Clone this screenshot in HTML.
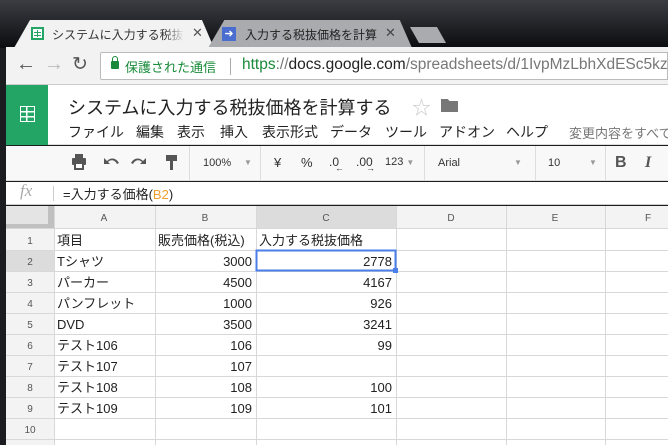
<!DOCTYPE html><html><head><meta charset="utf-8"><style>
*{margin:0;padding:0;box-sizing:border-box}
body{width:668px;height:445px;overflow:hidden;background:#1a1c20;font-family:"Liberation Sans","Noto Sans CJK JP",sans-serif;position:relative}
.a{position:absolute}
.t{white-space:nowrap}
</style></head><body>
<div class="a" style="left:0;top:0;width:668px;height:48px;background:linear-gradient(#3a3d42,#0c0d10)"></div>
<!-- tabs -->
<div class="a" style="left:14px;top:20px;width:200px;height:28px;background:#f2f2f2;clip-path:polygon(0 100%,8% 0,94% 0,100% 100%)"></div>
<div class="a" style="left:31px;top:27px;width:13px;height:13px;background:#23a566;border:2px solid #23a566"><div style="width:9px;height:9px;border:1px solid #fff;background:linear-gradient(#23a566,#23a566) 0 2px/9px 1px no-repeat,linear-gradient(#23a566,#23a566) 0 5px/9px 1px no-repeat,linear-gradient(#23a566,#23a566) 3px 0/1px 9px no-repeat,#fff"></div></div>
<div class="a t" style="left:52px;top:26px;width:132px;overflow:hidden;font-size:12px;color:#333;-webkit-mask-image:linear-gradient(90deg,#000 85%,transparent)">システムに入力する税抜価格</div>
<div class="a" style="left:192px;top:25px;font-size:13px;color:#555">✕</div>
<div class="a" style="left:208px;top:20px;width:204px;height:28px;background:#a9abaf;clip-path:polygon(0 100%,8% 0,94% 0,100% 100%)"></div>
<div class="a" style="left:222px;top:27px;width:14px;height:14px;background:#4a6ed0;color:#fff;font-size:11px;text-align:center;line-height:14px">➜</div>
<div class="a t" style="left:245px;top:26px;font-size:12px;color:#222">入力する税抜価格を計算</div>
<div class="a" style="left:385px;top:25px;font-size:13px;color:#444">✕</div>
<div class="a" style="left:410px;top:27px;width:36px;height:16px;background:#a9abaf;clip-path:polygon(0 0,75% 0,100% 100%,25% 100%)"></div>
<!-- toolbar -->
<div class="a" style="left:6px;top:47px;width:662px;height:38px;background:#f2f2f2;border-bottom:1px solid #ccc"></div>
<div class="a" style="left:16px;top:53px;font-size:20px;color:#555">←</div>
<div class="a" style="left:44px;top:53px;font-size:20px;color:#bbb">→</div>
<div class="a" style="left:72px;top:53px;font-size:19px;color:#555">↻</div>
<div class="a" style="left:100px;top:52px;width:568px;height:28px;background:#fff;border:1px solid #bbb;border-radius:2px 0 0 2px"></div>
<div class="a" style="left:111px;top:61px;width:8px;height:8px;background:#198a3a;border-radius:1px"></div>
<div class="a" style="left:112px;top:56px;width:6px;height:7px;border:1.5px solid #198a3a;border-bottom:none;border-radius:3px 3px 0 0"></div>
<div class="a t" style="left:125px;top:57px;font-size:13px;color:#198a3a">保護された通信</div>
<div class="a" style="left:230px;top:58px;width:1px;height:17px;background:#aaa"></div>
<div class="a t" style="left:242px;top:56px;font-size:15.5px;color:#777"><span style="color:#198a3a">https</span>://<span style="color:#222">docs.google.com</span>/spreadsheets/d/1IvpMzLbhXdESc5kz</div>
<!-- sheets header -->
<div class="a" style="left:6px;top:85px;width:662px;height:60px;background:#fff;border-bottom:1px solid #ddd"></div>
<div class="a" style="left:6px;top:85px;width:42px;height:60px;background:#23a566"></div>
<div class="a" style="left:20px;top:106px;width:15px;height:16px;border:1.5px solid #fff;background:linear-gradient(#fff,#fff) 0 4px/100% 1.5px no-repeat,linear-gradient(#fff,#fff) 0 9px/100% 1.5px no-repeat,linear-gradient(#fff,#fff) 5px 0/1.5px 100% no-repeat"></div>
<div class="a t" style="left:68px;top:94px;font-size:18px;color:#222">システムに入力する税抜価格を計算する</div>
<div class="a" style="left:412px;top:93px;font-size:19px;color:#ccc">☆</div>
<div class="a" style="left:441px;top:99px;width:17px;height:13px;background:#777;clip-path:polygon(0 0,40% 0,50% 15%,100% 15%,100% 100%,0 100%)"></div>
<div class="a t" style="top:122px;font-size:14px;color:#222;left:0;width:668px">
<span class="a" style="left:68px">ファイル</span><span class="a" style="left:136px">編集</span><span class="a" style="left:177px">表示</span><span class="a" style="left:220px">挿入</span><span class="a" style="left:262px">表示形式</span><span class="a" style="left:330px">データ</span><span class="a" style="left:385px">ツール</span><span class="a" style="left:439px">アドオン</span><span class="a" style="left:506px">ヘルプ</span></div>
<div class="a t" style="left:569px;top:123px;font-size:13px;color:#777">変更内容をすべて</div>
<!-- tool row -->
<div class="a" style="left:6px;top:146px;width:662px;height:35px;background:#f8f8f8;border-bottom:1px solid #ddd"></div>
<svg class="a" style="left:70px;top:154px" width="110" height="18" fill="#555">
<rect x="5" y="0" width="8" height="4"/><rect x="2" y="4" width="14" height="7" rx="1"/><rect x="5" y="9" width="8" height="6" fill="#fff" stroke="#555" stroke-width="2"/>
<path d="M34 4v6h6l-2-2c3-3 7-2 9 2l2-1c-3-5-8-6-12-2z"/>
<path d="M76 4v6h-6l2-2c-3-3-7-2-9 2l-2-1c3-5 8-6 12-2z"/>
<rect x="96" y="1" width="11" height="6"/><rect x="100" y="7" width="3" height="9"/>
</svg>
<div class="a" style="left:189px;top:146px;width:1px;height:35px;background:#ddd"></div>
<div class="a t" style="left:203px;top:157px;font-size:11px;color:#333">100%</div>
<div class="a" style="left:244px;top:158px;font-size:8px;color:#999">▼</div>
<div class="a" style="left:260px;top:146px;width:1px;height:35px;background:#ddd"></div>
<div class="a t" style="left:274px;top:155px;font-size:13px;color:#333">¥</div>
<div class="a t" style="left:301px;top:155px;font-size:13px;color:#333">%</div>
<div class="a t" style="left:329px;top:155px;font-size:12px;color:#333">.0</div>
<div class="a t" style="left:335px;top:163px;font-size:9px;color:#333">←</div>
<div class="a t" style="left:356px;top:155px;font-size:12px;color:#333">.00</div>
<div class="a t" style="left:366px;top:163px;font-size:9px;color:#333">→</div>
<div class="a t" style="left:385px;top:156px;font-size:11px;color:#333">123 <span style="color:#999;font-size:8px">▼</span></div>
<div class="a" style="left:424px;top:146px;width:1px;height:35px;background:#ddd"></div>
<div class="a t" style="left:438px;top:157px;font-size:11px;color:#333">Arial</div>
<div class="a" style="left:514px;top:158px;font-size:8px;color:#999">▼</div>
<div class="a" style="left:535px;top:146px;width:1px;height:35px;background:#ddd"></div>
<div class="a t" style="left:548px;top:157px;font-size:11px;color:#333">10</div>
<div class="a" style="left:589px;top:158px;font-size:8px;color:#999">▼</div>
<div class="a" style="left:605px;top:146px;width:1px;height:35px;background:#ddd"></div>
<div class="a" style="left:615px;top:154px;font-size:16px;font-weight:bold;color:#555">B</div>
<div class="a" style="left:645px;top:154px;font-size:16px;font-style:italic;font-family:'Liberation Serif',serif;font-weight:bold;color:#555">I</div>
<!-- formula bar -->
<div class="a" style="left:6px;top:182px;width:662px;height:23px;background:#fff;border-bottom:1px solid #ccc"></div>
<div class="a" style="left:20px;top:181px;font-size:17px;font-style:italic;font-family:'Liberation Serif',serif;color:#aaa">fx</div>
<div class="a" style="left:53px;top:186px;width:1px;height:15px;background:#ccc"></div>
<div class="a t" style="left:63px;top:184px;font-size:13px;color:#222">=入力する価格(<span style="color:#f0a030">B2</span>)</div>
<!-- grid -->
<div class="a" style="left:6px;top:206px;width:662px;height:239px;background:#fff"></div>
<svg class="a" style="left:0;top:0" width="668" height="445">
<rect x="6" y="206" width="662" height="23" fill="#f3f3f3"/>
<rect x="256" y="206" width="140" height="23" fill="#dcdcdc"/>
<rect x="6" y="229" width="48" height="216" fill="#f3f3f3"/>
<rect x="6" y="250" width="48" height="21" fill="#dcdcdc"/>
<rect x="6" y="206" width="48" height="23" fill="#e4e4e4"/>
<rect x="48" y="206" width="6" height="23" fill="#c0c0c0"/>
<rect x="6" y="224" width="48" height="5" fill="#c0c0c0"/>
<g stroke="#d8d8d8" stroke-width="1">
<line x1="54.5" y1="206" x2="54.5" y2="445"/><line x1="155.5" y1="206" x2="155.5" y2="445"/><line x1="256.5" y1="206" x2="256.5" y2="445"/><line x1="396.5" y1="206" x2="396.5" y2="445"/><line x1="506.5" y1="206" x2="506.5" y2="445"/><line x1="605.5" y1="206" x2="605.5" y2="445"/>
<line x1="6" y1="228.5" x2="668" y2="228.5"/><line x1="6" y1="250.5" x2="668" y2="250.5"/><line x1="6" y1="271.5" x2="668" y2="271.5"/><line x1="6" y1="292.5" x2="668" y2="292.5"/><line x1="6" y1="313.5" x2="668" y2="313.5"/><line x1="6" y1="334.5" x2="668" y2="334.5"/><line x1="6" y1="355.5" x2="668" y2="355.5"/><line x1="6" y1="376.5" x2="668" y2="376.5"/><line x1="6" y1="397.5" x2="668" y2="397.5"/><line x1="6" y1="418.5" x2="668" y2="418.5"/><line x1="6" y1="439.5" x2="668" y2="439.5"/>
</g>
<rect x="256.5" y="250.5" width="139" height="20" fill="none" stroke="#4a7ee8" stroke-width="2"/>
<rect x="393" y="268" width="5" height="5" fill="#4a7ee8"/>
<g font-family="Liberation Sans,sans-serif" font-size="10" fill="#555" text-anchor="middle">
<text x="104" y="221">A</text><text x="205" y="221">B</text><text x="326" y="221">C</text><text x="451" y="221">D</text><text x="555" y="221">E</text><text x="648" y="221">F</text>
<text x="30" y="244">1</text><text x="30" y="265">2</text><text x="30" y="286">3</text><text x="30" y="307">4</text><text x="30" y="328">5</text><text x="30" y="349">6</text><text x="30" y="370">7</text><text x="30" y="391">8</text><text x="30" y="412">9</text><text x="30" y="433">10</text>
</g>
<g font-family="Liberation Sans,Noto Sans CJK JP,sans-serif" font-size="13" fill="#222">
<text x="57" y="245">項目</text><text x="57" y="266">Tシャツ</text><text x="57" y="287">パーカー</text><text x="57" y="308">パンフレット</text><text x="57" y="329">DVD</text><text x="57" y="350">テスト106</text><text x="57" y="371">テスト107</text><text x="57" y="392">テスト108</text><text x="57" y="413">テスト109</text>
<text x="158" y="245">販売価格(税込)</text><text x="259" y="245">入力する税抜価格</text>
</g>
<g font-family="Liberation Sans,sans-serif" font-size="13" fill="#222" text-anchor="end">
<text x="252" y="266">3000</text><text x="252" y="287">4500</text><text x="252" y="308">1000</text><text x="252" y="329">3500</text><text x="252" y="350">106</text><text x="252" y="371">107</text><text x="252" y="392">108</text><text x="252" y="413">109</text>
<text x="392" y="266">2778</text><text x="392" y="287">4167</text><text x="392" y="308">926</text><text x="392" y="329">3241</text><text x="392" y="350">99</text><text x="392" y="392">100</text><text x="392" y="413">101</text>
</g>
</svg>
</body></html>
